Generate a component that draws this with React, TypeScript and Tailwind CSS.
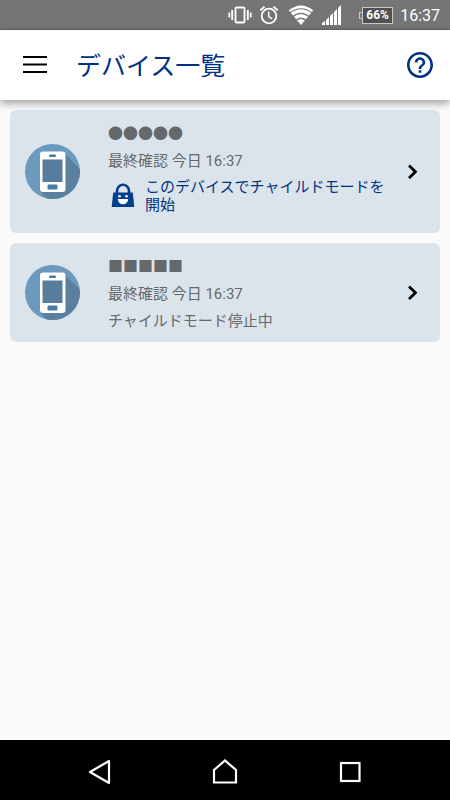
import React from "react";

function StatusBar() {
  return (
    <div className="flex h-[30px] shrink-0 items-center justify-end border-b border-[#686464] bg-[#757575] pt-px pr-2.5 text-white">
      <svg className="h-[20px] w-[24px]" viewBox="0 0 24 20" fill="none" stroke="#fff">
        <rect x="7.500" y="2.500" width="9" height="15" rx="1" strokeWidth="1.800" />
        <path d="M4.200 5v10M19.800 5v10" strokeWidth="1.900" />
        <path d="M1.300 7.500v5M22.700 7.500v5" strokeWidth="1.700" />
      </svg>
      <svg className="ml-[7px] h-[20px] w-[20px]" viewBox="0 0 20 20" fill="none" stroke="#fff">
        <circle cx="10" cy="11" r="7.300" strokeWidth="1.800" />
        <path d="M1.300 5.300L5.500 1.800M18.700 5.300L14.500 1.800" strokeWidth="1.800" />
        <path d="M9.700 6.500v5l3.500 2.300" strokeWidth="1.400" />
      </svg>
      <svg className="ml-[9px] h-[20px] w-[26px]" viewBox="0 0 26 20" fill="#fff">
        <path d="M0.800 5.500Q13 -4.500 25.200 5.500L13 20z" />
        <path d="M1 8.500Q13 -1 25 8.500M4 12.300Q13 4.500 22 12.300M7 16Q13 10.500 19 16" fill="none" stroke="#757575" strokeWidth="1.200" />
      </svg>
      <svg className="ml-[8px] h-[20px] w-[20px]" viewBox="0 0 20 20" fill="#fff">
        <path d="M0 20v-2l3-2v4zM4 20v-5l3-3v8zM8 20v-9l3-3v12zM12 20v-13l3-3v16zM16 20v-17l3-3v20z" />
      </svg>
      <div className="ml-[17px] flex items-center">
        <span className="h-[7px] w-[3px] border border-r-0 border-[#c8c8c8]" />
        <span className="flex h-[17px] w-[31px] items-center justify-center border border-[#c8c8c8] bg-[#505050] font-['Roboto',sans-serif] text-xs font-bold">
          66%
        </span>
      </div>
      <span className="ml-[7px] pt-0.5 font-['Roboto',sans-serif] text-[16px] leading-[26px]">16:37</span>
    </div>
  );
}

function Header() {
  return (
    <header className="relative flex h-[70px] shrink-0 items-center bg-white pr-[17px] pl-[23px] shadow-[0_3px_8px_rgba(0,0,0,0.38)]">
      <button type="button" aria-label="メニュー" className="h-6 w-6">
        <svg className="h-6 w-6" viewBox="0 0 24 24" fill="none" stroke="#000" strokeWidth="2">
          <path d="M0 4h24M0 11.500h24M0 19h24" />
        </svg>
      </button>
      <h1 className="ml-[29px] flex-1 pt-1 text-[25px] leading-[36px] text-[#003284]">デバイス一覧</h1>
      <button type="button" aria-label="ヘルプ" className="h-[26px] w-[26px]">
        <svg className="h-[26px] w-[26px]" viewBox="2 2 20 20" fill="#003284">
          <path d="M11 18h2v-2h-2v2zm1-16C6.480 2 2 6.480 2 12s4.480 10 10 10 10-4.480 10-10S17.520 2 12 2zm0 18c-4.410 0-8-3.590-8-8s3.590-8 8-8 8 3.590 8 8-3.590 8-8 8zm0-14c-2.210 0-4 1.790-4 4h2c0-1.100.900-2 2-2s2 .900 2 2c0 2-3 1.750-3 5h2c0-2.250 3-2.500 3-5 0-2.210-1.790-4-4-4z" />
        </svg>
      </button>
    </header>
  );
}

function PhoneIcon({ id }: { id: string }) {
  return (
    <svg className="h-[55px] w-[55px] shrink-0" viewBox="0 0 55 55">
      <clipPath id={id}>
        <circle cx="27.500" cy="27.500" r="27.500" />
      </clipPath>
      <g clipPath={`url(#${id})`}>
        <rect width="56" height="56" fill="#6c99be" />
        <path d="M39 9L60 30V60H25L15 46z" fill="#5b7f9e" />
      </g>
      <rect x="15" y="7.500" width="25.500" height="40.500" rx="3" fill="#fff" />
      <rect x="24" y="10.500" width="7" height="2.500" rx="1" fill="#4b7da4" />
      <rect x="17.500" y="15.500" width="20" height="22.500" fill="#587c9b" />
      <rect x="22.500" y="40.500" width="10" height="5" rx="1.200" fill="#4b7da4" />
    </svg>
  );
}

function LockIcon() {
  return (
    <svg className="h-[26px] w-[24px] shrink-0" viewBox="0 0 24 26">
      <path d="M6 12V8a6 6.300 0 0 1 12 0V12" fill="none" stroke="#003f8c" strokeWidth="2.600" />
      <path d="M2.200 9.500h19.600L23.300 24H0.700z" fill="#003f8c" />
      <circle cx="8.500" cy="13.300" r="1.300" fill="#fff" />
      <circle cx="15.500" cy="13.300" r="1.300" fill="#fff" />
      <path d="M6.800 16h10.400a5.200 5.200 0 0 1-10.400 0z" fill="#fff" />
    </svg>
  );
}

function DeviceCard({ id, name, children }: { id: string; name: string; children: React.ReactNode }) {
  return (
    <li>
      <button
        type="button"
        className="flex w-full items-center rounded-md bg-[#dce4eb] pr-[21px] pl-[15px] text-left text-[15px] leading-[27px] text-[#65696c]"
      >
        <PhoneIcon id={id} />
        <span className="ml-7 block min-w-0 flex-1 pt-[11px] pb-[7px]">
          <span className="block">{name}</span>
          <span className="block">最終確認 今日 16:37</span>
          {children}
        </span>
        <svg className="ml-4 h-4 w-3 shrink-0" viewBox="0 0 12 16" fill="none" stroke="#000" strokeWidth="2.700">
          <path d="M2 1.500L8.500 7.700 2 14" />
        </svg>
      </button>
    </li>
  );
}

function NavBar() {
  return (
    <nav className="flex h-[60px] shrink-0 items-center justify-center gap-[99px] bg-black pt-1">
      <button type="button" aria-label="戻る" className="h-[26px] w-[26px]">
        <svg className="h-[26px] w-[26px]" viewBox="0 0 26 26" fill="none" stroke="#fff" strokeWidth="2.200" strokeLinejoin="round">
          <path d="M3 13L22 2v22z" />
        </svg>
      </button>
      <button type="button" aria-label="ホーム" className="h-[26px] w-[26px]">
        <svg className="h-[26px] w-[26px]" viewBox="0 0 26 26" fill="none" stroke="#fff" strokeWidth="2.200">
          <path d="M2 11L13 1.500 24 11v12.500H2z" />
        </svg>
      </button>
      <button type="button" aria-label="アプリ履歴" className="h-[26px] w-[26px]">
        <svg className="h-[26px] w-[26px]" viewBox="0 0 26 26" fill="none" stroke="#fff" strokeWidth="2.200">
          <rect x="4" y="4" width="18.500" height="18" />
        </svg>
      </button>
    </nav>
  );
}

export default function App() {
  return (
    <div className="flex min-h-screen flex-col bg-[#fafafa] font-['Roboto','Noto_Sans_CJK_JP',sans-serif]">
      <StatusBar />
      <Header />
      <main className="flex-1 p-2.5">
        <ul className="flex flex-col gap-2.5">
          <DeviceCard id="device-a" name="●●●●●">
            <span className="mt-[3px] mb-3 flex items-center gap-2.5 pl-[3px] leading-[18px] text-[#003284]">
              <LockIcon />
              <span className="flex-1">このデバイスでチャイルドモードを開始</span>
            </span>
          </DeviceCard>
          <DeviceCard id="device-b" name="■■■■■">
            <span className="block">チャイルドモード停止中</span>
          </DeviceCard>
        </ul>
      </main>
      <NavBar />
    </div>
  );
}
